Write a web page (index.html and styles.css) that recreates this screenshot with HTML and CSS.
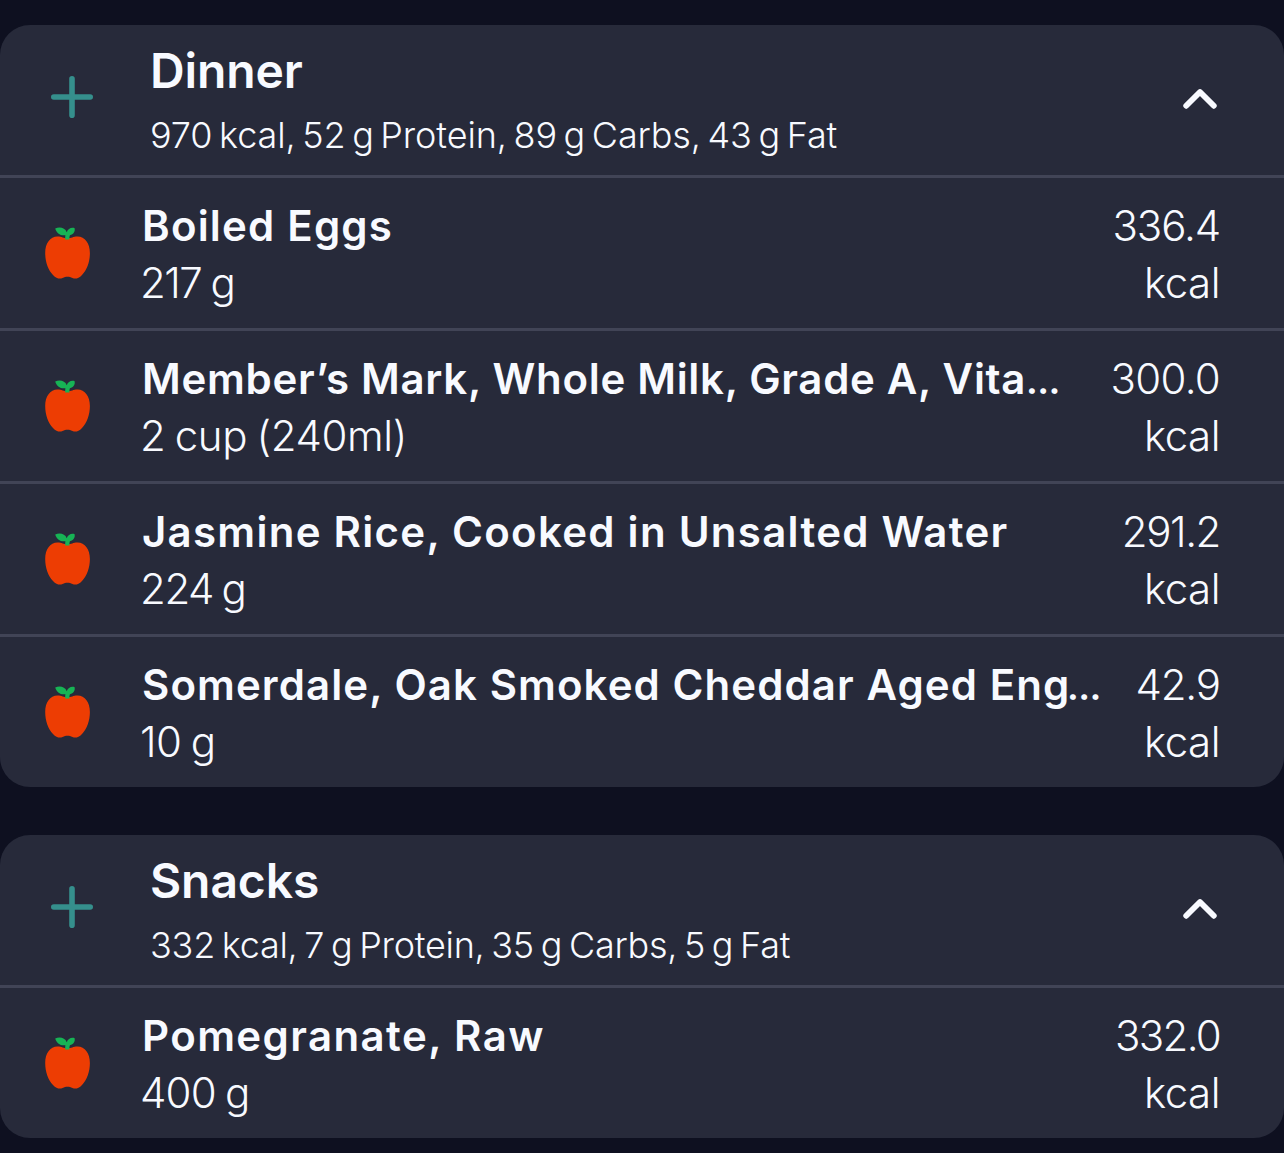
FILE: index.html
```html
<!DOCTYPE html>
<html lang="en">
<head>
<meta charset="utf-8">
<title>Food diary</title>
<link rel="stylesheet" href="styles.css">
</head>
<body>
<svg class="defs" aria-hidden="true">
  <symbol id="apple" viewBox="0 0 46 54">
    <path fill="#ed3d03" d="M22.500 12.500C18.500 12.500 17 10.600 12.500 10.600C5 10.600 .2 17.500 .2 27C.2 36 3.200 44 8 49C11.500 52.900 15 53.200 17.500 52C19.500 51.200 20.500 50.700 22.500 50.700C24.500 50.700 25.500 51.200 27.500 52C30 53.200 33.500 52.900 37 49C41.800 44 44.900 36 44.900 27C44.900 17.500 40 10.600 32.500 10.600C28 10.600 26.500 12.500 22.500 12.500Z"/>
    <path fill="#17b355" d="M20.200 13.500V11.500C20.200 10.500 20.300 9.700 20.400 9.200C15.500 10 11.500 7 10.200 2.400C14.500.5 20.200 1.500 21.700 6.200C23 3 26 1 29.500 2.100C30.500 5.500 28.500 8.600 24.900 9.200C24.400 10.300 24.400 12 24.500 13.500Z"/>
  </symbol>
  <symbol id="plus" viewBox="0 0 42 42">
    <path fill="none" stroke="#358f8c" stroke-width="5.600" stroke-linecap="round" d="M21 2.800V39.200M2.800 21H39.200"/>
  </symbol>
  <symbol id="chevron" viewBox="0 0 36 22">
    <path fill="none" stroke="#f8faff" stroke-width="5.800" stroke-linecap="round" stroke-linejoin="round" d="M4.200 17.800L18 4L31.800 17.800"/>
  </symbol>
</svg>
<main class="diary">
  <section class="meal">
    <header class="meal-head">
      <svg class="plus"><use href="#plus"/></svg>
      <div class="meal-text">
        <h2 class="meal-name">Dinner</h2>
        <p class="meal-sum">970 kcal, 52 g Protein, 89 g Carbs, 43 g Fat</p>
      </div>
      <svg class="chevron"><use href="#chevron"/></svg>
    </header>
    <article class="food eggs">
      <svg class="apple"><use href="#apple"/></svg>
      <div class="food-text"><h3 class="food-name">Boiled Eggs</h3><p class="amount">217 g</p></div>
      <p class="energy"><span class="value">336.4</span><br>kcal</p>
    </article>
    <article class="food milk">
      <svg class="apple"><use href="#apple"/></svg>
      <div class="food-text"><h3 class="food-name">Member’s Mark, Whole Milk, Grade A, Vita<span class="more">…</span></h3><p class="amount">2 cup (240ml)</p></div>
      <p class="energy"><span class="value">300.0</span><br>kcal</p>
    </article>
    <article class="food rice">
      <svg class="apple"><use href="#apple"/></svg>
      <div class="food-text"><h3 class="food-name">Jasmine Rice, Cooked in Unsalted Water</h3><p class="amount">224 g</p></div>
      <p class="energy"><span class="value">291.2</span><br>kcal</p>
    </article>
    <article class="food cheese">
      <svg class="apple"><use href="#apple"/></svg>
      <div class="food-text"><h3 class="food-name">Somerdale, Oak Smoked Cheddar Aged Eng<span class="more">…</span></h3><p class="amount">10 g</p></div>
      <p class="energy"><span class="value">42.9</span><br>kcal</p>
    </article>
  </section>
  <section class="meal">
    <header class="meal-head">
      <svg class="plus"><use href="#plus"/></svg>
      <div class="meal-text">
        <h2 class="meal-name">Snacks</h2>
        <p class="meal-sum compact">332 kcal, 7 g Protein, 35 g Carbs, 5 g Fat</p>
      </div>
      <svg class="chevron"><use href="#chevron"/></svg>
    </header>
    <article class="food fruit">
      <svg class="apple"><use href="#apple"/></svg>
      <div class="food-text"><h3 class="food-name">Pomegranate, Raw</h3><p class="amount">400 g</p></div>
      <p class="energy"><span class="value">332.0</span><br>kcal</p>
    </article>
  </section>
</main>
</body>
</html>
```
FILE: styles.css
```css
* { box-sizing: border-box; margin: 0; padding: 0; }
body {
  background: #0e1020;
  color: #f8faff;
  font-family: Inter, "Liberation Sans", sans-serif;
  overflow: hidden;
}
svg { display: block; flex: none; }
.defs { display: none; }
.diary {
  display: flex;
  flex-direction: column;
  gap: 48px;
  height: 1153px;
  padding-top: 25px;
}
.meal { background: #272a3a; border-radius: 30px; overflow: hidden; }
.meal-head {
  display: flex;
  height: 150px;
  padding: 16px 66px 0 51px;
}
.plus { width: 42px; height: 42px; margin-top: 35px; }
.meal-text { flex: 1; margin-left: 57px; white-space: nowrap; }
.meal-name { font-size: 48px; line-height: 59px; font-weight: 600; letter-spacing: -0.1px; }
.meal-sum {
  margin-top: 8px;
  font-size: 36px;
  line-height: 54px;
  font-weight: 300;
  letter-spacing: -0.1px;
  word-spacing: -3.4px;
}
.compact { letter-spacing: -0.25px; word-spacing: -3.1px; }
.chevron { width: 36px; height: 22px; margin-top: 47px; }
.food {
  display: flex;
  height: 153px;
  padding: 19px 64px 0 45px;
  border-top: 3px solid #414456;
  font-size: 42px;
  line-height: 57px;
}
.apple { width: 46px; height: 54px; margin-top: 29px; }
.food-text { flex: 1; min-width: 0; margin-left: 51px; white-space: nowrap; }
.food-name { font-size: 42px; line-height: 57px; font-weight: 600; letter-spacing: 1.2px; }
.more { font-size: 32px; font-weight: 800; line-height: 1; letter-spacing: 0; }
.amount { margin-left: -2px; font-weight: 300; letter-spacing: -0.8px; word-spacing: -2px; }
.energy { font-weight: 300; text-align: right; letter-spacing: -0.5px; }
.value { letter-spacing: -1.1px; }

.eggs .amount { letter-spacing: -1.5px; word-spacing: -1px; }
.milk .food-name { letter-spacing: 0.7px; }
.milk .amount { letter-spacing: -0.4px; }
.milk .value { letter-spacing: -0.7px; }
.rice .food-name { letter-spacing: 1.27px; }
.rice .amount { letter-spacing: -1.4px; }
.rice .value { letter-spacing: -1.4px; }
.cheese .food-name { letter-spacing: 1.08px; }
.cheese .more { margin-left: -3px; }
.cheese .amount { letter-spacing: -0.5px; }
.fruit .food-name { letter-spacing: 1.4px; }
.fruit .value { letter-spacing: -1.7px; }
```
